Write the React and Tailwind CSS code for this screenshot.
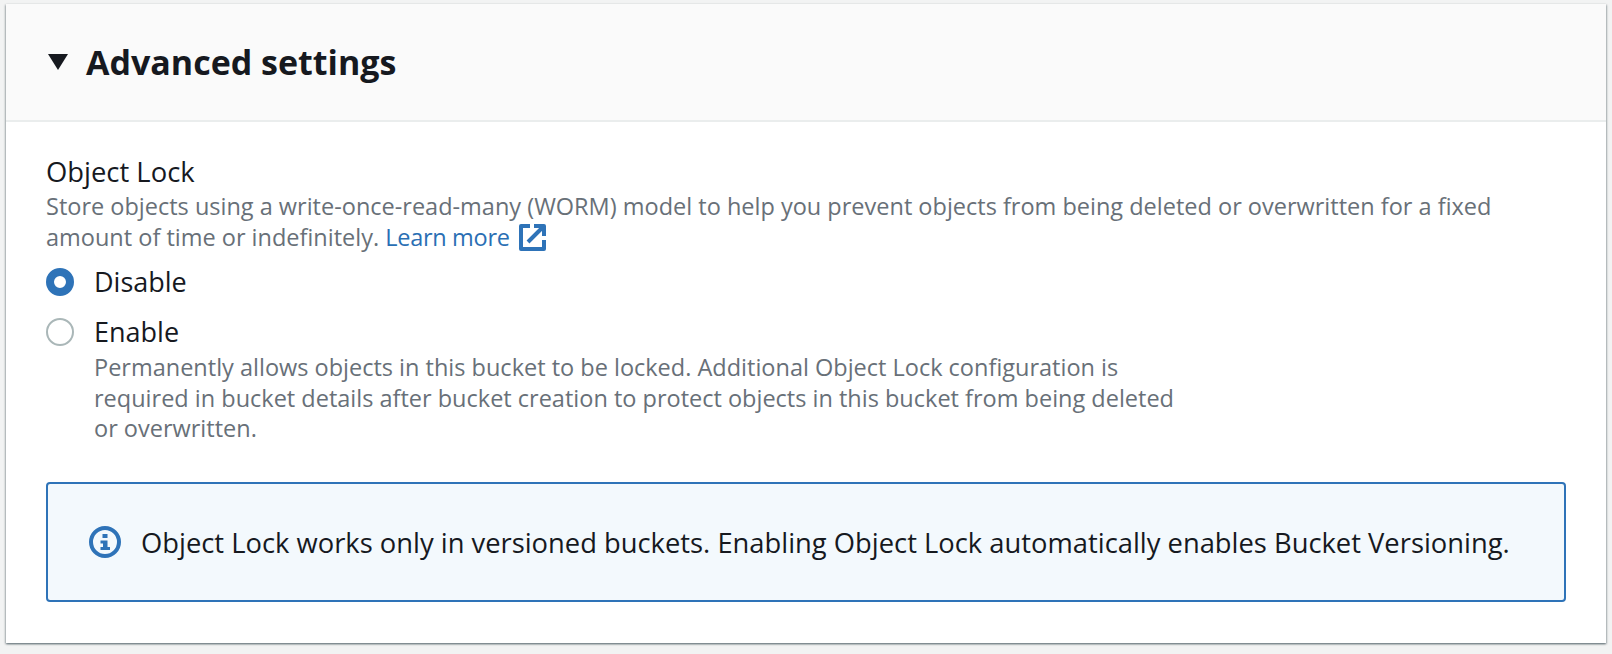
export default function App() {
  return (
    <div className="h-[654px] bg-[#f2f3f3] pt-[4px] px-[6px] font-['Open_Sans','Noto_Sans',sans-serif] text-[#16191f]">
      <div className="h-[639px] bg-white shadow-[0_1px_2px_rgba(0,28,36,0.5),1px_1px_2px_rgba(0,28,36,0.15),-1px_1px_2px_rgba(0,28,36,0.15)]">
        <div className="h-[118px] flex items-center pl-[42px] bg-[#fafafa] border-b-2 border-[#eaeded]">
          <svg width="20" height="16" viewBox="0 0 20 16" className="shrink-0"><path d="M0 0H20L10 16Z" fill="#16191f" /></svg>
          <h2 className="ml-[18px] text-[34px] font-bold leading-[40px]">Advanced settings</h2>
        </div>
        <div className="pl-[40px] pr-[40px] pt-[32px]">
          <div className="text-[27.4px] leading-[36px]">Object Lock</div>
          <div className="text-[23.5px] leading-[31px] text-[#687078] max-w-[1460px] mt-[1px]">
            Store objects using a write-once-read-many (WORM) model to help you prevent objects from being deleted or overwritten for a fixed amount of time or indefinitely.{" "}
            <span className="text-[#2a6fb4] tracking-[-0.3px]">Learn more</span>
            <svg width="28" height="28" viewBox="0 0 28 28" className="inline-block ml-[9px] align-[-5px]" fill="none" stroke="#2e73b8" strokeWidth="4" strokeLinejoin="round">
              <path d="M11 3H2V26H25V17" />
              <path d="M9 19L24 4M15 3H25V13" />
            </svg>
          </div>
          <div className="mt-[4px] flex items-center h-[50px]">
            <span className="w-[28px] h-[28px] rounded-full border-[8px] border-[#2e73b8] bg-white shrink-0" />
            <span className="ml-[20px] text-[27px]">Disable</span>
          </div>
          <div className="flex items-center h-[50px]">
            <span className="w-[28px] h-[28px] rounded-full border-2 border-[#aab7b8] bg-white shrink-0" />
            <span className="ml-[20px] text-[27px]">Enable</span>
          </div>
          <div className="ml-[48px] -mt-[5px] text-[23.5px] leading-[30.5px] text-[#687078] max-w-[1085px]">
            Permanently allows objects in this bucket to be locked. Additional Object Lock configuration is required in bucket details after bucket creation to protect objects in this bucket from being deleted or overwritten.
          </div>
          <div className="mt-[38.5px] h-[120px] flex items-center pl-[41px] border-2 border-[#2e73b8] rounded-[4px] bg-[#f3f9fd]">
            <svg width="32" height="32" viewBox="0 0 32 32" className="shrink-0">
              <circle cx="16" cy="16" r="14" fill="none" stroke="#2e73b8" strokeWidth="4" />
              <rect x="13.5" y="8" width="5" height="4" fill="#2e73b8" />
              <path d="M11.5 14.5H18.5V21H21V24H11.5V21H14V17.5H11.5Z" fill="#2e73b8" />
            </svg>
            <span className="ml-[20px] pt-[2px] text-[27.35px]">Object Lock works only in versioned buckets. Enabling Object Lock automatically enables Bucket Versioning.</span>
          </div>
        </div>
      </div>
    </div>
  );
}
